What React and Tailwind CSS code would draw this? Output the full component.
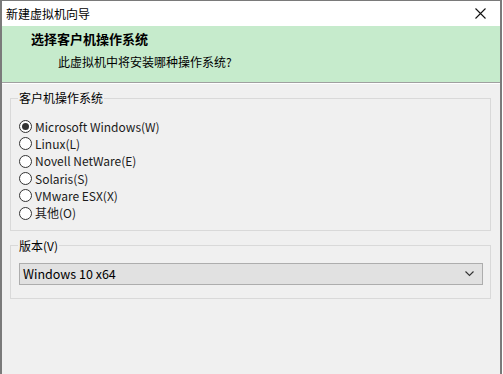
import React from "react";

const font = { fontFamily: '"Noto Sans CJK SC", "Noto Sans", sans-serif' };

function Radio({ checked, label }) {
  return (
    <div className="flex items-center h-[17.3px]">
      <span className="w-[13px] h-[13px] rounded-full border border-[#333333] bg-white flex items-center justify-center ml-[8px]">
        {checked && <span className="w-[7px] h-[7px] rounded-full bg-[#333333]" />}
      </span>
      <span className="ml-[3px] text-[12px] leading-none text-[#1a1a1a]">{label}</span>
    </div>
  );
}

export default function App() {
  const opts = [
    "Microsoft Windows(W)",
    "Linux(L)",
    "Novell NetWare(E)",
    "Solaris(S)",
    "VMware ESX(X)",
    "其他(O)",
  ];
  return (
    <div className="w-[503px] h-[374px] bg-white" style={font}>
      <div className="w-[502px] h-[374px] border-l-2 border-r-2 border-t border-[#7a7a7a] bg-[#f0f0f0] flex flex-col">
        <div className="h-[25px] bg-white flex items-center justify-between pl-[4px] pr-[14px]">
          <span className="text-[12px] text-black">新建虚拟机向导</span>
          <svg width="11" height="11" viewBox="0 0 11 11">
            <path d="M0.5 0.5 L10.5 10.5 M10.5 0.5 L0.5 10.5" stroke="#111" strokeWidth="1.1" />
          </svg>
        </div>
        <div className="h-[57px] bg-[#c6ebcc] border-b border-[#a0a0a0] flex flex-col pl-[29px] pt-[5px]">
          <span className="text-[13px] font-bold text-black leading-[16px]">选择客户机操作系统</span>
          <span className="text-[12px] text-black leading-[16px] ml-[27px] mt-[7px]">此虚拟机中将安装哪种操作系统?</span>
        </div>
        <div className="border-t border-white" />
        <div className="flex flex-col pl-[8px] pr-[9px]">
          <fieldset className="mt-[6px] border border-[#d9d9d9] pl-[7px] pt-[12px] pb-[8px]">
            <legend className="px-[1px] text-[12px] leading-[16px] text-black">客户机操作系统</legend>
            <div className="flex flex-col -ml-[7px]">
              {opts.map((o, i) => (
                <Radio key={o} checked={i === 0} label={o} />
              ))}
            </div>
          </fieldset>
          <fieldset className="mt-[7px] border border-[#d9d9d9] pl-[7px] pr-[7px] pt-[9px] pb-[13px]">
            <legend className="px-[1px] text-[12px] leading-[16px] text-black">版本(V)</legend>
            <div className="h-[22px] bg-[#e1e1e1] border border-[#adadad] flex items-center justify-between pl-[3px] pr-[8px] ml-[1px]">
              <span className="text-[12.5px] text-black leading-none">Windows 10 x64</span>
              <svg width="9" height="6" viewBox="0 0 9 6">
                <path d="M0.5 0.5 L4.5 4.5 L8.5 0.5" stroke="#333" strokeWidth="1.1" fill="none" />
              </svg>
            </div>
          </fieldset>
        </div>
      </div>
    </div>
  );
}
